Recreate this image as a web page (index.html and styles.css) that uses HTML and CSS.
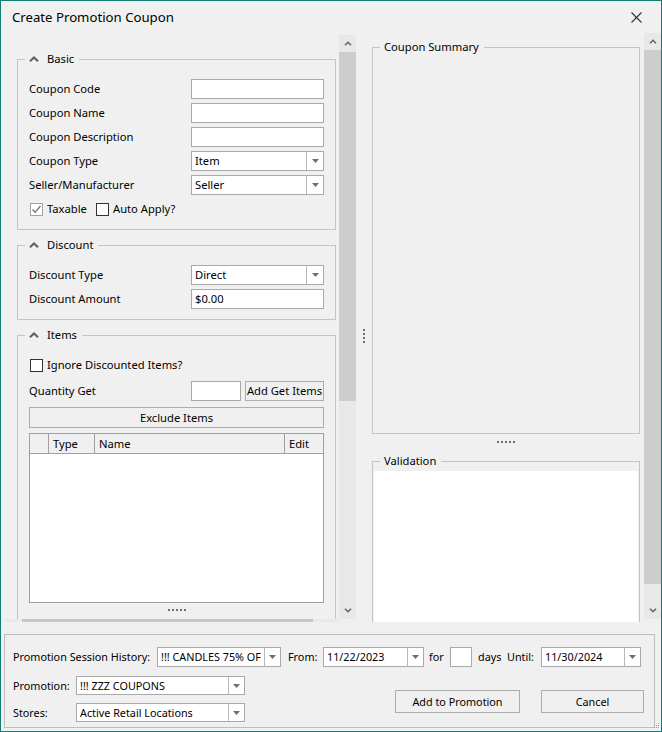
FILE: index.html
```html
<!DOCTYPE html>
<html>
<head>
<meta charset="utf-8">
<title>Create Promotion Coupon</title>
<link rel="stylesheet" href="styles.css">
</head>
<body>
<div class="window">
  <div class="titlebar">
    <span class="title">Create Promotion Coupon</span>
    <svg class="close" viewBox="0 0 11 11" width="11" height="11"><path d="M0.5 0.5 L10.5 10.5 M10.5 0.5 L0.5 10.5" stroke="#333" stroke-width="1.1" fill="none"/></svg>
  </div>

  <div class="main">
    <div class="pane-left">
      <div class="left-content">
        <div class="left-scroll">
          <div class="group basic">
            <div class="legend"><svg class="chev" viewBox="0 0 10 6" width="10" height="6"><polyline points="1,5.2 5,1.4 9,5.2" fill="none" stroke="#5e5e5e" stroke-width="2"/></svg><span>Basic</span></div>
            <div class="form">
              <span class="lbl">Coupon Code</span><div class="input"></div>
              <span class="lbl">Coupon Name</span><div class="input"></div>
              <span class="lbl">Coupon Description</span><div class="input"></div>
              <span class="lbl">Coupon Type</span>
              <div class="select"><span class="val">Item</span><span class="arrow"><svg viewBox="0 0 7 4" width="7" height="4"><polygon points="0,0 7,0 3.5,4" fill="#6e6e6e"/></svg></span></div>
              <span class="lbl">Seller/Manufacturer</span>
              <div class="select"><span class="val">Seller</span><span class="arrow"><svg viewBox="0 0 7 4" width="7" height="4"><polygon points="0,0 7,0 3.5,4" fill="#6e6e6e"/></svg></span></div>
            </div>
            <div class="checks">
              <label class="check taxable"><span class="box box-light"><svg viewBox="0 0 11 11" width="11" height="11"><polyline points="1.5,5.5 4.2,8.3 9.5,2" fill="none" stroke="#707070" stroke-width="1.3"/></svg></span><span>Taxable</span></label>
              <label class="check"><span class="box"></span><span>Auto Apply?</span></label>
            </div>
          </div>

          <div class="group discount">
            <div class="legend"><svg class="chev" viewBox="0 0 10 6" width="10" height="6"><polyline points="1,5.2 5,1.4 9,5.2" fill="none" stroke="#5e5e5e" stroke-width="2"/></svg><span>Discount</span></div>
            <div class="form">
              <span class="lbl">Discount Type</span>
              <div class="select"><span class="val">Direct</span><span class="arrow"><svg viewBox="0 0 7 4" width="7" height="4"><polygon points="0,0 7,0 3.5,4" fill="#6e6e6e"/></svg></span></div>
              <span class="lbl">Discount Amount</span><div class="input">$0.00</div>
            </div>
          </div>

          <div class="group items">
            <div class="legend"><svg class="chev" viewBox="0 0 10 6" width="10" height="6"><polyline points="1,5.2 5,1.4 9,5.2" fill="none" stroke="#5e5e5e" stroke-width="2"/></svg><span>Items</span></div>
            <div class="checks">
              <label class="check"><span class="box"></span><span>Ignore Discounted Items?</span></label>
            </div>
            <div class="qty-row">
              <span class="lbl qty-lbl">Quantity Get</span>
              <div class="input qty-input"></div>
              <div class="btn add-get">Add Get Items</div>
            </div>
            <div class="btn exclude">Exclude Items</div>
            <div class="table">
              <div class="thead">
                <div class="th"></div>
                <div class="th">Type</div>
                <div class="th">Name</div>
                <div class="th last">Edit</div>
              </div>
              <div class="tbody"></div>
            </div>
            <div class="hgrip"><i></i><i></i><i></i><i></i><i></i></div>
          </div>
        </div>
        <div class="hscroll"><div class="hthumb"></div></div>
      </div>
      <div class="vscroll vs-left">
        <div class="sb-btn"><svg viewBox="0 0 8 5" width="8" height="5"><polyline points="1,4.3 4,1.3 7,4.3" fill="none" stroke="#666" stroke-width="1.6"/></svg></div>
        <div class="sb-track"><div class="sb-thumb thumb-left"></div></div>
        <div class="sb-btn"><svg viewBox="0 0 8 5" width="8" height="5"><polyline points="1,0.7 4,3.7 7,0.7" fill="none" stroke="#666" stroke-width="1.6"/></svg></div>
      </div>
    </div>

    <div class="splitter"><div class="vgrip"><i></i><i></i><i></i><i></i></div></div>

    <div class="pane-right">
      <div class="right-content">
        <div class="group summary">
          <div class="legend"><span>Coupon Summary</span></div>
        </div>
        <div class="hgrip right-grip"><i></i><i></i><i></i><i></i><i></i></div>
        <div class="group validation">
          <div class="legend"><span>Validation</span></div>
          <div class="white"></div>
        </div>
      </div>
      <div class="vscroll vs-right">
        <div class="sb-btn"><svg viewBox="0 0 8 5" width="8" height="5"><polyline points="1,4.3 4,1.3 7,4.3" fill="none" stroke="#666" stroke-width="1.6"/></svg></div>
        <div class="sb-track"><div class="sb-thumb thumb-right"></div></div>
        <div class="sb-btn"><svg viewBox="0 0 8 5" width="8" height="5"><polyline points="1,0.7 4,3.7 7,0.7" fill="none" stroke="#666" stroke-width="1.6"/></svg></div>
      </div>
    </div>
  </div>

  <div class="bottom">
    <div class="brow">
      <span class="blbl w-history">Promotion Session History:</span>
      <div class="select bsel w-hist-sel"><span class="val">!!! CANDLES 75% OF</span><span class="arrow"><svg viewBox="0 0 7 4" width="7" height="4"><polygon points="0,0 7,0 3.5,4" fill="#6e6e6e"/></svg></span></div>
      <span class="blbl w-from">From:</span>
      <div class="select bsel w-date"><span class="val">11/22/2023</span><span class="arrow"><svg viewBox="0 0 7 4" width="7" height="4"><polygon points="0,0 7,0 3.5,4" fill="#6e6e6e"/></svg></span></div>
      <span class="blbl w-for">for</span>
      <div class="input days-input"></div>
      <span class="blbl w-days">days</span>
      <span class="blbl w-until">Until:</span>
      <div class="select bsel w-date2"><span class="val">11/30/2024</span><span class="arrow"><svg viewBox="0 0 7 4" width="7" height="4"><polygon points="0,0 7,0 3.5,4" fill="#6e6e6e"/></svg></span></div>
    </div>
    <div class="blower">
      <div class="bcol">
        <div class="brow2">
          <span class="blbl w-promo">Promotion:</span>
          <div class="select bsel w-promo-sel"><span class="val">!!! ZZZ COUPONS</span><span class="arrow"><svg viewBox="0 0 7 4" width="7" height="4"><polygon points="0,0 7,0 3.5,4" fill="#6e6e6e"/></svg></span></div>
        </div>
        <div class="brow2 brow3">
          <span class="blbl w-promo">Stores:</span>
          <div class="select bsel w-promo-sel"><span class="val">Active Retail Locations</span><span class="arrow"><svg viewBox="0 0 7 4" width="7" height="4"><polygon points="0,0 7,0 3.5,4" fill="#6e6e6e"/></svg></span></div>
        </div>
      </div>
      <div class="bbuttons">
        <div class="btn bbtn add-promo">Add to Promotion</div>
        <div class="btn bbtn cancel">Cancel</div>
      </div>
    </div>
  </div>

  <svg class="sizegrip" viewBox="0 0 6 6" width="6" height="6"><rect x="4" y="0" width="1" height="1" fill="#9a9a9a"/><rect x="2" y="2" width="1" height="1" fill="#9a9a9a"/><rect x="4" y="2" width="1" height="1" fill="#9a9a9a"/><rect x="0" y="4" width="1" height="1" fill="#9a9a9a"/><rect x="2" y="4" width="1" height="1" fill="#9a9a9a"/><rect x="4" y="4" width="1" height="1" fill="#9a9a9a"/></svg>
</div>
</body>
</html>
```

FILE: styles.css
```css
* { box-sizing: border-box; }
html, body { margin: 0; padding: 0; }
body {
  width: 662px;
  height: 732px;
  overflow: hidden;
  background: #f0f0f0;
  color: #000;
  font-family: "Noto Sans", "Open Sans", sans-serif;
  font-size: 11.2px;
}
.window {
  position: relative;
  width: 662px;
  height: 732px;
  border: 1px solid #137e72;
  background: #f0f0f0;
  display: flex;
  flex-direction: column;
}
.titlebar {
  height: 32px;
  flex: none;
  display: flex;
  align-items: center;
  justify-content: space-between;
  padding: 0 19px 0 11px;
}
.title { font-size: 13.2px; line-height: 18px; }
.close { display: block; }

.main {
  height: 589px;
  flex: none;
  display: flex;
  overflow: hidden;
}

/* left pane */
.pane-left { width: 355px; flex: none; display: flex; }
.left-content { width: 338px; flex: none; display: flex; flex-direction: column; }
.left-scroll { flex: 1; overflow: hidden; padding: 26px 0 0 16px; }
.hscroll {
  height: 3px;
  flex: none;
  margin-left: 4px;
  padding-left: 17px;
  background: #e9e9e9;
}
.hthumb { width: 291px; height: 3px; background: #c6c6c6; }

/* group boxes */
.group {
  position: relative;
  width: 319px;
  border: 1px solid #c4c4c4;
}
.legend {
  position: absolute;
  top: -9px;
  left: 7px;
  height: 16px;
  line-height: 16px;
  padding: 0 5px 0 4px;
  background: #f0f0f0;
  display: flex;
  align-items: center;
  gap: 8px;
  white-space: nowrap;
}
.chev { display: block; }
.basic { padding: 19px 11px 10px 11px; }
.discount { margin-top: 15px; padding: 19px 11px 10px 11px; }
.items { margin-top: 15px; padding: 19px 11px 0 11px; height: 320px; border-bottom: none; }

.form {
  display: grid;
  grid-template-columns: 162px 133px;
  grid-auto-rows: 20px;
  row-gap: 4px;
}
.lbl { align-self: center; white-space: nowrap; line-height: 16px; }

.input {
  height: 20px;
  border: 1px solid #a9a9a9;
  background: #fff;
  padding: 0 3px;
  display: flex;
  align-items: center;
  line-height: 16px;
  white-space: nowrap;
}
.select {
  height: 20px;
  border: 1px solid #a9a9a9;
  background: #fff;
  display: flex;
  line-height: 16px;
}
.select .val {
  flex: 1;
  padding-left: 3px;
  display: flex;
  align-items: center;
  white-space: nowrap;
  overflow: hidden;
}
.select .arrow {
  width: 17px;
  flex: none;
  border-left: 1px solid #b8b8b8;
  display: flex;
  align-items: center;
  justify-content: center;
}
.select .arrow svg { display: block; }

.checks {
  height: 20px;
  margin-top: 4px;
  display: flex;
  align-items: center;
  padding-left: 1px;
}
.items .checks { margin-top: 0; }
.check { display: flex; align-items: center; gap: 4px; white-space: nowrap; line-height: 16px; }
.taxable { width: 66px; }
.box {
  width: 13px;
  height: 13px;
  flex: none;
  border: 1px solid #333;
  background: #fff;
  display: flex;
  align-items: center;
  justify-content: center;
}
.box-light { border-color: #a2a2a2; }
.box svg { display: block; }

.qty-row { display: flex; height: 20px; margin-top: 6px; }
.qty-lbl { width: 162px; flex: none; }
.qty-input { width: 50px; flex: none; }

.btn {
  border: 1px solid #adadad;
  background: #f0f0f0;
  display: flex;
  align-items: center;
  justify-content: center;
  white-space: nowrap;
  line-height: 16px;
}
.add-get { width: 79px; margin-left: 4px; height: 20px; }
.exclude { width: 295px; height: 21px; margin-top: 6px; }

.table {
  width: 295px;
  height: 170px;
  margin-top: 5px;
  border: 1px solid #a0a0a0;
  display: flex;
  flex-direction: column;
}
.thead {
  display: grid;
  grid-template-columns: 19px 46px 190px 1fr;
  height: 20px;
  flex: none;
  background: #f0f0f0;
  border-bottom: 1px solid #a0a0a0;
}
.th {
  border-right: 1px solid #a0a0a0;
  padding-left: 4px;
  line-height: 19px;
  white-space: nowrap;
}
.th.last { border-right: none; }
.tbody { flex: 1; background: #fff; }

.hgrip {
  display: flex;
  justify-content: center;
  gap: 2px;
  margin-top: 6px;
  height: 2px;
}
.hgrip i { display: block; width: 2px; height: 2px; background: #6d6d6d; }

/* scrollbars */
.vscroll {
  width: 17px;
  flex: none;
  align-self: flex-start;
  background: #e8e8e8;
  display: flex;
  flex-direction: column;
}
.vs-left { margin-top: 2px; height: 584px; }
.vs-right { height: 586px; }
.sb-btn {
  height: 17px;
  flex: none;
  display: flex;
  align-items: center;
  justify-content: center;
}
.sb-btn svg { display: block; }
.sb-track { flex: 1; }
.sb-thumb { width: 17px; background: #cdcdcd; }
.thumb-left { height: 349px; }
.thumb-right { height: 534px; }

/* splitter */
.splitter { width: 16px; flex: none; padding: 296px 0 0 7px; }
.vgrip i { display: block; width: 2px; height: 2px; margin-bottom: 2px; background: #6d6d6d; }

/* right pane */
.pane-right { width: 289px; flex: none; display: flex; }
.right-content {
  width: 272px;
  flex: none;
  display: flex;
  flex-direction: column;
  overflow: hidden;
}
.summary { width: 268px; height: 387px; margin-top: 14px; flex: none; }
.right-grip { width: 268px; margin-top: 7px; margin-bottom: 18px; flex: none; }
.validation {
  width: 268px;
  height: 200px;
  flex: none;
  padding: 9px 1px 1px 1px;
}
.white { height: 100%; background: #fff; }

/* bottom panel */
.bottom {
  width: 651px;
  height: 94px;
  flex: none;
  margin: 12px 0 0 3px;
  border: 1px solid #bdbdbd;
  padding: 12px 0 0 8px;
  font-size: 10.8px;
}
.brow { display: flex; height: 20px; align-items: center; }
.blbl { white-space: nowrap; flex: none; line-height: 16px; }
.bsel { flex: none; }
.bsel .arrow { width: 16px; }
.w-history { width: 144px; }
.w-hist-sel { width: 124px; height: 20px; }
.w-from { width: 35px; margin-left: 7px; }
.w-date { width: 101px; height: 20px; }
.w-for { width: 21px; margin-left: 5px; }
.days-input { width: 22px; height: 20px; flex: none; }
.w-days { width: 29px; margin-left: 6px; }
.w-until { width: 34px; }
.w-date2 { width: 100px; height: 20px; }

.blower { display: flex; margin-top: 9px; }
.bcol { display: flex; flex-direction: column; gap: 8px; }
.brow2 { display: flex; align-items: center; height: 19px; }
.w-promo { width: 63px; }
.w-promo-sel { width: 169px; height: 19px; }
.bbuttons { display: flex; gap: 21px; margin: 14px 0 0 150px; }
.bbtn { height: 23px; }
.add-promo { width: 125px; }
.cancel { width: 103px; }

.sizegrip { position: absolute; right: 1px; bottom: 2px; display: block; }
```
